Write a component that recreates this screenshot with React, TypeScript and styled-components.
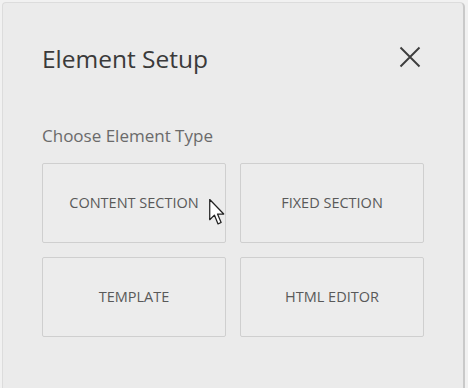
import React from "react";
import styled, { createGlobalStyle } from "styled-components";

const Global = createGlobalStyle`
  html, body {
    margin: 0;
    padding: 0;
    background: #f1f1f1;
  }
  body {
    font-family: "Open Sans", "Noto Sans", sans-serif;
  }
`;

const types = ["Content Section", "Fixed Section", "Template", "HTML Editor"];

export default function App() {
  return (
    <>
      <Global />
      <Page>
        <Panel>
          <Header>
            <Title>Element Setup</Title>
            <Close aria-label="close">
              <svg width="22" height="22" viewBox="0 0 22 22">
                <path d="M1.5 1.5 L20.5 20.5 M20.5 1.5 L1.5 20.5" stroke="#3d3d3d" strokeWidth="1.9" fill="none" />
              </svg>
            </Close>
          </Header>
          <Label>Choose Element Type</Label>
          <Grid>
            {types.map((t, i) => (
              <Card key={t}>
                {t}
                {i === 0 && (
                  <Cursor width="19" height="29" viewBox="0 0 18 28">
                    <path
                      d="M1.5 1.5 L1.5 21 L6 16.5 L9.5 25 L12.5 23.7 L9 15.5 L15 15.5 Z"
                      fill="#fff"
                      stroke="#222"
                      strokeWidth="1.2"
                      strokeLinejoin="round"
                    />
                  </Cursor>
                )}
              </Card>
            ))}
          </Grid>
        </Panel>
      </Page>
    </>
  );
}

const Page = styled.div`
  width: 468px;
  height: 388px;
  padding: 2px 2px 0 2px;
  box-sizing: border-box;
  overflow: hidden;
`;

const Panel = styled.div`
  width: 463px;
  height: 400px;
  box-sizing: border-box;
  background: #ebebeb;
  border: 1px solid #dcdcdc;
  border-right: 2px solid #c9c9c9;
  border-radius: 4px 5px 0 0;
  padding: 39px 42px 0 39px;
`;

const Header = styled.div`
  display: flex;
  align-items: flex-start;
  justify-content: space-between;
`;

const Title = styled.h2`
  margin: 0;
  font-size: 24.5px;
  line-height: 33px;
  font-weight: 400;
  color: #3a3a3a;
`;

const Close = styled.div`
  display: flex;
  margin-top: 4px;
  margin-right: 0;
`;

const Label = styled.div`
  margin-top: 49px;
  font-size: 17px;
  line-height: 23px;
  color: #6a6a6a;
`;

const Grid = styled.div`
  display: grid;
  grid-template-columns: 184px 184px;
  grid-auto-rows: 80px;
  column-gap: 14px;
  row-gap: 14px;
  margin-top: 16px;
`;

const Card = styled.div`
  position: relative;
  display: flex;
  align-items: center;
  justify-content: center;
  box-sizing: border-box;
  border: 1px solid #cfcfcf;
  border-radius: 2px;
  background: #ececec;
  font-size: 14.5px;
  text-transform: uppercase;
  color: #595959;
  padding-bottom: 1px;
`;

const Cursor = styled.svg`
  position: absolute;
  left: 165px;
  top: 34px;
`;
